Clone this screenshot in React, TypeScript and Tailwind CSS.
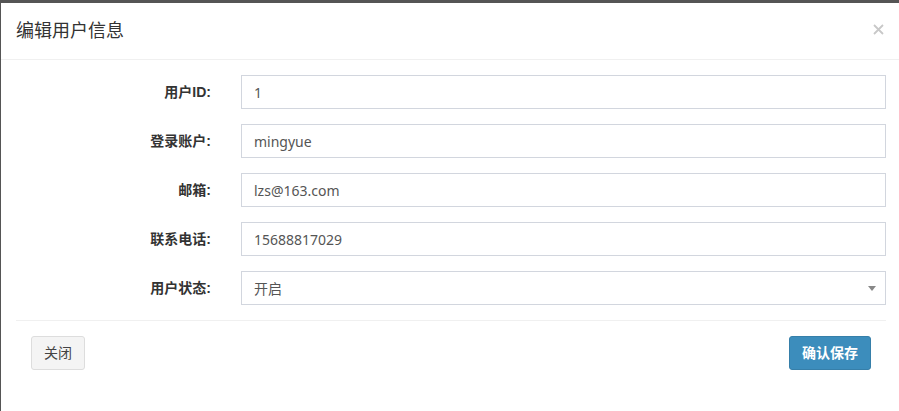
import React from "react";

const font = '"Liberation Sans", "Noto Sans CJK SC", sans-serif';
const valFont = '"Noto Sans", "Noto Sans CJK SC", sans-serif';

const rows: { label: string; value: string; select?: boolean }[] = [
  { label: "用户ID:", value: "1" },
  { label: "登录账户:", value: "mingyue" },
  { label: "邮箱:", value: "lzs@163.com" },
  { label: "联系电话:", value: "15688817029" },
  { label: "用户状态:", value: "开启", select: true },
];

export default function App() {
  return (
    <div className="w-[899px] h-[411px] bg-[#555] overflow-hidden" style={{ fontFamily: font }}>
      <div className="ml-[1px] mt-[3px] bg-white h-[408px] w-[900px]">
        <div className="relative border-b border-[#f0f0f0] pl-[15px] pt-[15px] pb-[15px]">
          <div className="text-[18px] leading-[26px] text-[#333]">编辑用户信息</div>
          <svg className="absolute left-[872px] top-[21px]" width="11" height="11" viewBox="0 0 11 11">
            <path d="M1 1 L10 10 M10 1 L1 10" stroke="#c8c8c8" strokeWidth="1.8" />
          </svg>
        </div>
        <div className="pl-[15px] pt-[15px] w-[885px]">
          <div className="flex flex-col gap-[15px]">
            {rows.map((r) => (
              <div key={r.label} className="flex items-center">
                <div className="w-[210px] pr-[15px] text-right text-[14px] font-bold text-[#333]">{r.label}</div>
                <div
                  className="ml-[15px] relative flex-1 h-[34px] border border-[#d2d6de] flex items-center pl-[12px] text-[14px] text-[#555]"
                  style={{ fontFamily: valFont }}
                >
                  {r.value}
                  {r.select && (
                    <svg className="absolute right-[9px] top-[14px]" width="8" height="5" viewBox="0 0 8 5">
                      <path d="M0 0 L8 0 L4 5 Z" fill="#888" />
                    </svg>
                  )}
                </div>
              </div>
            ))}
          </div>
          <div className="mt-[15px] border-t border-[#f0f0f0] pt-[15px] px-[15px] flex justify-between">
            <button className="h-[34px] px-[12px] bg-[#f4f4f4] border border-[#ddd] rounded-[3px] text-[14px] text-[#444]">关闭</button>
            <button className="h-[34px] px-[12px] bg-[#3c8dbc] border border-[#367fa9] rounded-[3px] text-[14px] text-white font-bold">确认保存</button>
          </div>
        </div>
      </div>
    </div>
  );
}
